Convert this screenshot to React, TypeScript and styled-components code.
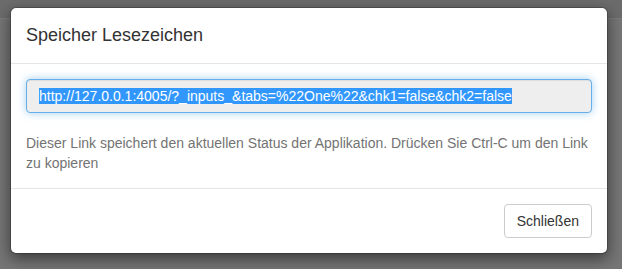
import React from 'react';
import styled, { createGlobalStyle } from 'styled-components';

const GlobalStyle = createGlobalStyle`
    html, body {
        margin: 0;
        padding: 0;
        background: #767676;
        font-family: "Liberation Sans", Arial, sans-serif;
        font-size: 14px;
        line-height: 1.42857;
        color: #333;
    }
`;

const Backdrop = styled.div`
    width: 622px;
    height: 269px;
    overflow: hidden;
    background: linear-gradient(#6c6c6c 0, #6c6c6c 18px, #7b7b7b 18px, #7b7b7b 19px, #767676 19px);
    padding: 7px 0 0 10px;
    box-sizing: border-box;
`;

const Dialog = styled.div`
    width: 598px;
    background: #fff;
    border: 1px solid rgba(0, 0, 0, 0.2);
    border-radius: 6px;
    box-shadow: 0 5px 15px rgba(0, 0, 0, 0.5);
    box-sizing: border-box;
    background-clip: padding-box;
`;

const Header = styled.div`
    padding: 15px 15px 14px;
    border-bottom: 1px solid #e5e5e5;
`;

const Title = styled.h4`
    margin: 0;
    font-size: 18px;
    font-weight: 400;
    line-height: 1.42857;
    color: #333;
`;

const Body = styled.div`
    padding: 15px;
`;

const UrlField = styled.div`
    height: 34px;
    box-sizing: border-box;
    padding: 6px 12px;
    background: #eee;
    border: 1px solid #66afe9;
    border-radius: 4px;
    box-shadow: inset 0 1px 1px rgba(0, 0, 0, 0.075), 0 0 8px rgba(102, 175, 233, 0.6);
    font-size: 14px;
    line-height: 20px;
    color: #555;
    white-space: nowrap;
    overflow: hidden;
`;

const Selected = styled.span`
    background: #3297fd;
    color: #fff;
`;

const Help = styled.p`
    margin: 20px 0 0;
    color: #737373;
    font-size: 14px;
    line-height: 20px;
`;

const Footer = styled.div`
    display: flex;
    justify-content: flex-end;
    padding: 15px;
    border-top: 1px solid #e5e5e5;
`;

const Button = styled.button`
    height: 34px;
    padding: 6px 12px;
    font-family: inherit;
    font-size: 14px;
    line-height: 20px;
    color: #333;
    background: #fff;
    border: 1px solid #ccc;
    border-radius: 4px;
    cursor: pointer;
`;

const App: React.FC = () => {
    return (
        <Backdrop>
            <GlobalStyle />
            <Dialog>
                <Header>
                    <Title>Speicher Lesezeichen</Title>
                </Header>
                <Body>
                    <UrlField>
                        <Selected>http://127.0.0.1:4005/?_inputs_&amp;tabs=%22One%22&amp;chk1=false&amp;chk2=false</Selected>
                    </UrlField>
                    <Help>
                        Dieser Link speichert den aktuellen Status der Applikation. Drücken Sie Ctrl-C um den Link zu kopieren
                    </Help>
                </Body>
                <Footer>
                    <Button>Schließen</Button>
                </Footer>
            </Dialog>
        </Backdrop>
    );
};

export default App;
